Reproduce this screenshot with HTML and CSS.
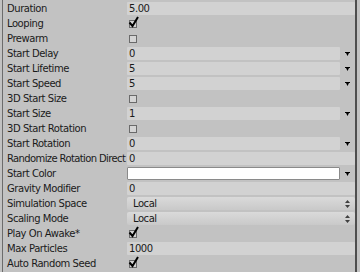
FILE: index.html
```html
<!DOCTYPE html>
<html lang="en">
<head>
    <meta charset="UTF-8">
    <title>Particle System</title>
    <link rel="stylesheet" href="styles.css">
</head>
<body>
    <div class="inspector">
        <div class="row"><span class="label">Duration</span><div class="field">5.00</div></div>
        <div class="row"><span class="label">Looping</span><span class="check on"></span></div>
        <div class="row"><span class="label">Prewarm</span><span class="check"></span></div>
        <div class="row"><span class="label">Start Delay</span><div class="field short">0</div><span class="curve"></span></div>
        <div class="row"><span class="label">Start Lifetime</span><div class="field short">5</div><span class="curve"></span></div>
        <div class="row"><span class="label">Start Speed</span><div class="field short">5</div><span class="curve"></span></div>
        <div class="row"><span class="label">3D Start Size</span><span class="check"></span></div>
        <div class="row"><span class="label">Start Size</span><div class="field short">1</div><span class="curve"></span></div>
        <div class="row"><span class="label">3D Start Rotation</span><span class="check"></span></div>
        <div class="row"><span class="label">Start Rotation</span><div class="field short">0</div><span class="curve"></span></div>
        <div class="row"><span class="label tight">Randomize Rotation Direct</span><div class="field">0</div></div>
        <div class="row"><span class="label">Start Color</span><div class="field short color"></div><span class="curve"></span></div>
        <div class="row"><span class="label">Gravity Modifier</span><div class="field">0</div></div>
        <div class="row"><span class="label">Simulation Space</span><div class="field popup">Local<span class="updown"></span></div></div>
        <div class="row"><span class="label">Scaling Mode</span><div class="field popup">Local<span class="updown"></span></div></div>
        <div class="row"><span class="label">Play On Awake*</span><span class="check on"></span></div>
        <div class="row"><span class="label">Max Particles</span><div class="field">1000</div></div>
        <div class="row"><span class="label">Auto Random Seed</span><span class="check on"></span></div>
    </div>
</body>
</html>
```

FILE: styles.css
```css
body {
    margin: 0;
    background-color: #c2c2c2;
    font-family: "DejaVu Sans", sans-serif;
    font-size: 10px;
    letter-spacing: -0.45px;
    color: #1a1a1a;
}

.inspector {
    margin-left: 2px;
    width: 355px;
    height: 272px;
    box-sizing: border-box;
    padding-top: 2px;
    border-left: 1px solid #6c6c6c;
    border-right: 2px solid #4e4e4e;
}

.row {
    display: flex;
    height: 13px;
    line-height: 13px;
    margin-bottom: 2px;
}

.label {
    width: 120px;
    padding-left: 4px;
    flex-shrink: 0;
    white-space: nowrap;
    overflow: hidden;
}

.label.tight {
    letter-spacing: -0.62px;
}

.field {
    flex: 1;
    background-color: #d2d2d2;
    padding-left: 2px;
    border-radius: 1px;
}

.field.short {
    flex: none;
    width: 211px;
}

.field.color {
    background-color: #ffffff;
    border: 1px solid #8a8a8a;
    box-sizing: border-box;
    width: 213px;
}

.field.popup {
    position: relative;
    padding-left: 6px;
    background: linear-gradient(#dadada, #c9c9c9);
    border-radius: 2px;
}

.curve {
    width: 14px;
    background: url("data:image/svg+xml;utf8,<svg xmlns='http://www.w3.org/2000/svg' width='5' height='4'><path d='M0 0h5v1h-1l-1.5 3l-1.5-3h-1z' fill='black'/></svg>") no-repeat 5px 5px;
}

.updown {
    position: absolute;
    right: 5px;
    top: 3px;
    width: 5px;
    height: 8px;
    background: url("data:image/svg+xml;utf8,<svg xmlns='http://www.w3.org/2000/svg' width='5' height='8'><path d='M2.5 0l2.5 3h-5z M0 5h5l-2.5 3z' fill='%23404040'/></svg>") no-repeat;
}

.check {
    position: relative;
    margin: 3px 0 0 2px;
    width: 8px;
    height: 8px;
    box-sizing: border-box;
    border: 1px solid #6a6a6a;
    background-color: #d4d4d4;
}

.check.on::after {
    content: "";
    position: absolute;
    left: -2px;
    top: -5px;
    width: 12px;
    height: 12px;
    background: url("data:image/svg+xml;utf8,<svg xmlns='http://www.w3.org/2000/svg' width='12' height='12'><path d='M1.5 6.5l3 3.5l5.5-9' stroke='black' stroke-width='2' fill='none'/></svg>") no-repeat;
}
```
